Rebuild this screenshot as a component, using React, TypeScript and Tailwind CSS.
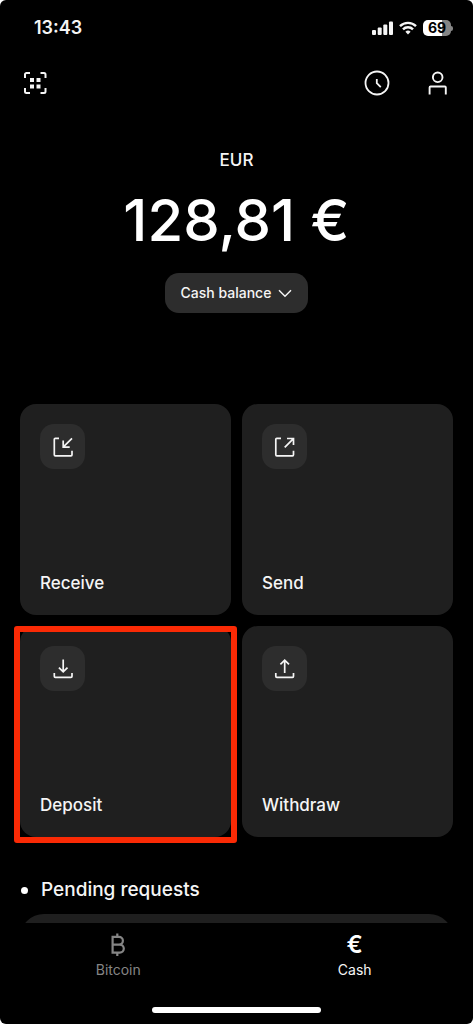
import type { ReactNode } from 'react';

interface Action {
  label: string;
  icon: ReactNode;
  highlighted?: boolean;
}

const strokeProps = {
  fill: 'none',
  stroke: 'currentColor',
  strokeWidth: 1.7,
};

const actions: Action[] = [
  {
    label: 'Receive',
    icon: (
      <svg viewBox="0 0 24 24" className="h-6 w-6" {...strokeProps} aria-hidden="true">
        <path d="M8 3.3H4.300a1 1 0 0 0-1 1V19.800a1 1 0 0 0 1 1H20a1 1 0 0 0 1-1V15.800" />
        <path d="M21 3.300 12.400 11.900M12.200 5.600V12.100H18.700" />
      </svg>
    ),
  },
  {
    label: 'Send',
    icon: (
      <svg viewBox="0 0 24 24" className="h-6 w-6" {...strokeProps} aria-hidden="true">
        <path d="M8 3.300H3.800a1 1 0 0 0-1 1V19.800a1 1 0 0 0 1 1H19.500a1 1 0 0 0 1-1V15.800" />
        <path d="M11.700 12.400 20.200 3.800M14 3.500H20.500V10" />
      </svg>
    ),
  },
  {
    label: 'Deposit',
    highlighted: true,
    icon: (
      <svg viewBox="0 0 24 24" className="h-6 w-6" {...strokeProps} aria-hidden="true">
        <path d="M3.300 15.900V19.300a1 1 0 0 0 1 1H20a1 1 0 0 0 1-1V15.900" />
        <path d="M12.200 2.500V15M7.900 10.600 12.200 14.900 16.500 10.600" />
      </svg>
    ),
  },
  {
    label: 'Withdraw',
    icon: (
      <svg viewBox="0 0 24 24" className="h-6 w-6" {...strokeProps} aria-hidden="true">
        <path d="M2.800 15.900V19.300a1 1 0 0 0 1 1H19.500a1 1 0 0 0 1-1V15.900" />
        <path d="M11.700 16V3.200M7.400 7.400 11.700 3.100 16 7.400" />
      </svg>
    ),
  },
];

function StatusBar() {
  return (
    <div className="flex h-14 items-center justify-between pr-5 pl-[34px]">
      <span className="text-lg font-semibold">13:43</span>
      <div className="flex items-center gap-[6px]">
        <svg viewBox="0 0 21 14" className="h-[14px] w-[21px]" fill="currentColor" aria-hidden="true">
          <rect x="0" y="9" width="4" height="5" rx="1" />
          <rect x="5.7" y="6.4" width="4" height="7.6" rx="1" />
          <rect x="11.3" y="3.5" width="4" height="10.5" rx="1" />
          <rect x="17" y="0.5" width="4" height="13.5" rx="1" />
        </svg>
        <svg viewBox="0 0 18 14" className="h-[14px] w-[18px]" fill="none" stroke="currentColor" strokeWidth="2.4" aria-hidden="true">
          <path d="M1 5.2a11.3 11.3 0 0 1 16 0" />
          <path d="M4 8.4a7 7 0 0 1 10 0" />
          <path d="M6.4 10.7a3.7 3.7 0 0 1 5.2 0L9 13.4z" fill="currentColor" stroke="none" />
        </svg>
        <div className="flex items-center">
          <div className="flex h-4 w-7 items-center justify-center rounded-[5px] bg-linear-to-r from-white from-69% to-[#858585] to-69% text-sm font-bold text-black">
            69
          </div>
          <div className="h-[5px] w-[2px] rounded-r-full bg-[#858585]" />
        </div>
      </div>
    </div>
  );
}

function TopBar() {
  return (
    <header className="flex h-[54px] items-center justify-between px-[22px]">
      <button type="button" aria-label="Scan code">
        <svg viewBox="0 0 26 26" className="h-[26px] w-[26px]" fill="none" stroke="currentColor" strokeWidth="2" aria-hidden="true">
          <path d="M3 8V4.5A1.5 1.5 0 0 1 4.5 3H8M18.500 3H22A1.5 1.5 0 0 1 23.500 4.500V8M23.500 18V21.500A1.500 1.500 0 0 1 22 23H18.500M8 23H4.500A1.500 1.500 0 0 1 3 21.500V18" />
          <path d="M8 8h4v4H8zM14.500 8h4v4h-4zM8 14.500h4v4H8zM14.500 14.500h4v4h-4z" fill="currentColor" stroke="none" />
        </svg>
      </button>
      <div className="flex items-center gap-[35px]">
        <button type="button" aria-label="Activity">
          <svg viewBox="0 0 26 26" className="h-[26px] w-[26px]" fill="none" stroke="currentColor" strokeWidth="1.8" aria-hidden="true">
            <circle cx="13" cy="13" r="11.5" />
            <path d="M12.8 9V13.2L16.8 17.2" />
          </svg>
        </button>
        <button type="button" aria-label="Profile">
          <svg viewBox="0 0 26 26" className="h-[26px] w-[26px]" fill="none" stroke="currentColor" strokeWidth="1.9" aria-hidden="true">
            <circle cx="12.700" cy="7.300" r="4.800" />
            <path d="M4.600 24.500V17.500a1 1 0 0 1 1-1H19.800a1 1 0 0 1 1 1V24.500" />
          </svg>
        </button>
      </div>
    </header>
  );
}

function ActionCard({ label, icon, highlighted }: Action) {
  return (
    <button
      type="button"
      className="relative flex aspect-square flex-col items-start justify-between rounded-2xl bg-[#1f1f1f] p-5 text-left"
    >
      <span className="flex h-[45px] w-[45px] items-center justify-center rounded-[14px] bg-[#2d2d2d]">
        {icon}
      </span>
      <span className="text-[17px] leading-6 font-medium">{label}</span>
      {highlighted && (
        <span className="absolute -inset-x-[6px] top-0 -bottom-[6px] rounded-[3px] border-6 border-[#fa2a05]" />
      )}
    </button>
  );
}

export default function App() {
  return (
    <div className="h-screen bg-white font-['Inter','Liberation_Sans',sans-serif] text-[#f5f5f5]">
      <div className="flex h-full flex-col overflow-hidden rounded-md bg-black">
        <StatusBar />
        <TopBar />

        <main className="min-h-0 flex-1 overflow-hidden px-5">
          {/* Balance */}
          <section className="flex flex-col items-center pt-10">
            <h2 className="text-[17px] leading-5 font-medium">EUR</h2>
            <p className="mt-4 text-[58px] leading-[68px] font-medium text-white">128,81 €</p>
            <button
              type="button"
              className="mt-[19px] flex h-10 items-center gap-[7px] rounded-[14px] bg-[#2d2d2d] px-4 text-sm font-medium"
            >
              Cash balance
              <svg viewBox="0 0 14 14" className="h-[14px] w-[14px]" fill="none" stroke="currentColor" strokeWidth="1.5" aria-hidden="true">
                <path d="M1 4.200 7 10.200 13 4.200" />
              </svg>
            </button>
          </section>

          {/* Actions */}
          <section className="mt-[91px] grid grid-cols-2 gap-[11px]">
            {actions.map((action) => (
              <ActionCard key={action.label} {...action} />
            ))}
          </section>

          {/* Pending requests */}
          <section className="mt-[41px]">
            <h2 className="flex items-center gap-[13px] pl-px text-[19px] leading-6 font-medium">
              <span className="h-[7px] w-[7px] rounded-full bg-white" />
              Pending requests
            </h2>
            <div className="mt-3 h-20 rounded-3xl bg-[#1f1f1f]" />
          </section>
        </main>

        <nav className="flex h-[101px] shrink-0 flex-col items-center justify-between pt-2 pb-[11px]">
          <div className="grid w-full grid-cols-2">
            <a href="#bitcoin" className="flex flex-col items-center text-sm text-[#858585]">
              <svg viewBox="0 0 18 28" className="h-7 w-[18px]" fill="none" stroke="currentColor" strokeWidth="2.2" aria-hidden="true">
                <path d="M3.600 5.800H10a3.800 3.800 0 0 1 0 7.800H3.600M10 13.600H10.800a4 4 0 0 1 0 8H3.600M3.600 4.700V22.700M8.300 2.500V5.800M8.300 21.600V25" />
              </svg>
              <span className="leading-[22px]">Bitcoin</span>
            </a>
            <a href="#cash" aria-current="page" className="flex flex-col items-center text-sm">
              <span className="text-2xl leading-7 font-semibold text-white">€</span>
              <span className="leading-[22px]">Cash</span>
            </a>
          </div>
          <div className="h-[6px] w-[169px] rounded-full bg-white" />
        </nav>
      </div>
    </div>
  );
}
